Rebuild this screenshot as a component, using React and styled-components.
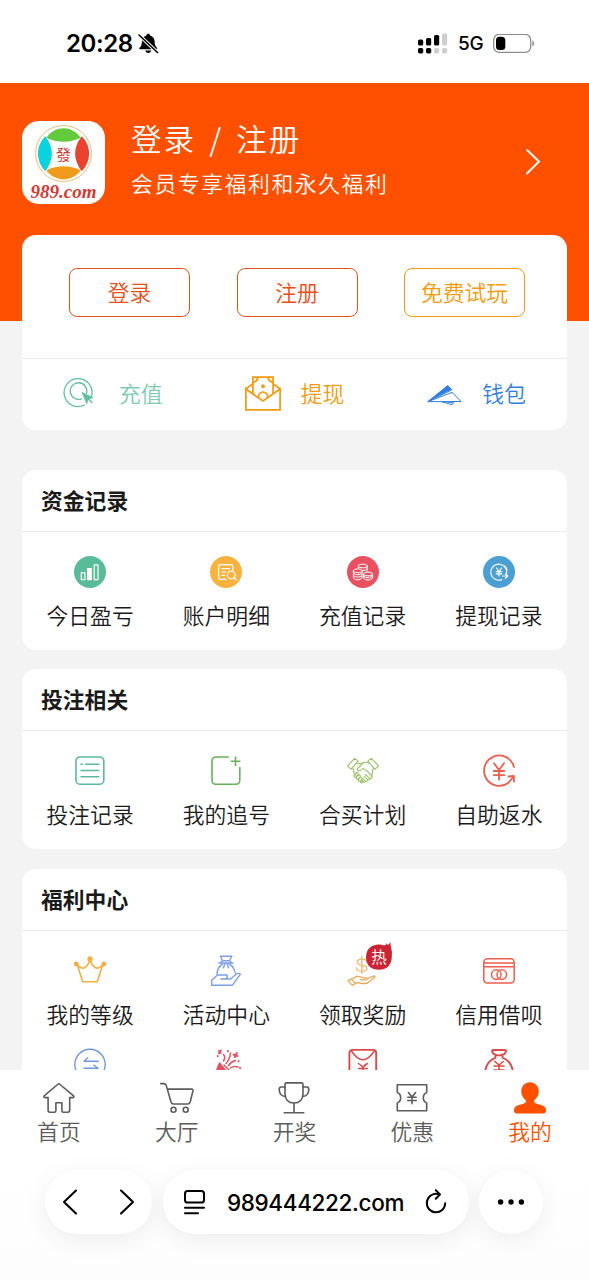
import React from "react";
import styled, { createGlobalStyle } from "styled-components";

const GlobalStyle = createGlobalStyle`
  * {
    box-sizing: border-box;
  }
  body {
    margin: 0;
    background: #fff;
    font-family: "Noto Sans CJK SC", sans-serif;
    font-weight: 350;
    color: #1a1a1a;
  }
`;

const Screen = styled.div`
  width: 589px;
  height: 1280px;
  overflow: hidden;
  display: flex;
  flex-direction: column;
  background: #fff;
`;

/* status bar */

const StatusBar = styled.div`
  flex: none;
  height: 83px;
  padding: 4px 54px 0 66px;
  display: flex;
  align-items: center;
  justify-content: space-between;
  font-family: Inter, sans-serif;
  color: #000;
`;

const StatusGroup = styled.div`
  display: flex;
  align-items: center;
  gap: ${(props) => props.$gap};
`;

const Time = styled.span`
  font-size: 24px;
  font-weight: 600;
  line-height: 30px;
  letter-spacing: -0.4px;
`;

const Network = styled.span`
  font-size: 19px;
  font-weight: 500;
  line-height: 24px;
  letter-spacing: -0.2px;
`;

/* scrolling page */

const Page = styled.div`
  flex: none;
  height: 987px;
  overflow: hidden;
  background: #f3f3f3;
`;

const Header = styled.div`
  height: 238px;
  padding: 38px 48px 0 22px;
  display: flex;
  align-items: flex-start;
  background: #ff5000;
  color: #fff;
`;

const Logo = styled.div`
  width: 83px;
  height: 83px;
  border-radius: 17px;
  background: #fff;
`;

const Welcome = styled.div`
  flex: 1;
  margin: -2px 0 0 26px;
`;

const WelcomeTitle = styled.div`
  font-size: 30.6px;
  line-height: 38px;
  letter-spacing: 2px;
  word-spacing: 4.2px;
  white-space: pre;
`;

const WelcomeText = styled.div`
  margin-top: 11px;
  font-size: 21.8px;
  line-height: 30px;
  letter-spacing: 1.6px;
`;

const HeaderArrow = styled.div`
  margin-top: 27px;
  line-height: 0;
`;

const ActionCard = styled.div`
  height: 195px;
  margin: -86px 22px 39.5px;
  border-radius: 14px;
  background: #fff;
`;

const ButtonRow = styled.div`
  height: 124px;
  padding: 33px 42px 0 47px;
  display: flex;
  justify-content: space-between;
  align-items: flex-start;
  border-bottom: 1px solid #ececec;
`;

const OutlineButton = styled.button`
  width: 121px;
  height: 49px;
  padding: 0 0 2px;
  border: 1.5px solid ${(props) => props.$color};
  border-radius: 8px;
  background: none;
  color: ${(props) => props.$color};
  font: inherit;
  font-size: 21.8px;
  line-height: 32px;
`;

const WalletRow = styled.div`
  height: 70px;
  padding-bottom: 2px;
  display: grid;
  grid-template-columns: repeat(3, 1fr);
`;

const WalletLink = styled.div`
  display: flex;
  align-items: center;
  justify-content: center;
  gap: 20px;
  color: ${(props) => props.$color};
  font-size: 21.8px;
  line-height: 32px;

  svg {
    flex: none;
    margin-bottom: 1px;
  }
`;

const Card = styled.div`
  margin: 0 22px 19.5px;
  border-radius: 14px;
  background: #fff;
`;

const CardTitle = styled.div`
  height: 62px;
  padding-left: 19px;
  border-bottom: 1px solid #ececec;
  font-size: 21.8px;
  font-weight: 700;
  line-height: 59px;
`;

const CardGrid = styled.div`
  padding: 24px 0 18px;
  display: grid;
  grid-template-columns: repeat(4, 1fr);
  row-gap: 17px;
`;

const Cell = styled.div`
  display: flex;
  flex-direction: column;
  align-items: center;
`;

const CellIcon = styled.div`
  position: relative;
  width: 32px;
  height: 32px;
  line-height: 0;
`;

const CellLabel = styled.div`
  margin: 11px 0 1px;
  font-size: 21.8px;
  line-height: 32px;
`;

const HotBadge = styled.div`
  position: absolute;
  left: 19px;
  top: -12px;
  width: 26px;
  height: 26px;
  line-height: 0;
`;

/* bottom tabs */

const TabBar = styled.div`
  flex: none;
  height: 84px;
  display: grid;
  grid-template-columns: repeat(5, 1fr);
`;

const Tab = styled.div`
  padding-top: 12px;
  display: flex;
  flex-direction: column;
  align-items: center;
  color: ${(props) => (props.$active ? "#ff5000" : "#5c5c5c")};
  font-size: 21.8px;
  line-height: 32px;

  svg {
    flex: none;
    margin-bottom: 1px;
  }
`;

/* browser toolbar */

const Toolbar = styled.div`
  flex: 1;
  padding: 16px 46px 0 45px;
  display: flex;
  align-items: flex-start;
  justify-content: space-between;
  background: linear-gradient(#fff, #fdfdfd);
`;

const Pill = styled.div`
  width: ${(props) => props.$width};
  height: 64px;
  padding: ${(props) => props.$padding || "0"};
  display: flex;
  align-items: center;
  justify-content: ${(props) => props.$justify || "space-between"};
  border-radius: 32px;
  background: #fff;
  box-shadow: 0 6px 26px rgba(0, 0, 0, 0.07);
`;

const Url = styled.span`
  font-family: Inter, sans-serif;
  font-size: 22.5px;
  font-weight: 500;
  letter-spacing: -0.35px;
  color: #000;
`;

function Icon({ children, size = 32, color = "currentColor", stroke = 1.4 }) {
  return (
    <svg
      width={size}
      height={size}
      viewBox={`0 0 ${size} ${size}`}
      fill="none"
      stroke={color}
      strokeWidth={stroke}
      strokeLinecap="round"
      strokeLinejoin="round"
      overflow="visible"
    >
      {children}
    </svg>
  );
}

function LogoImage() {
  return (
    <svg width="83" height="83" viewBox="0 0 83 83">
      <circle cx="41.5" cy="32.5" r="28" fill="none" stroke="#edbd78" />
      <path d="M24.3 16.7C33 4 50 4 58.7 16.7Q41.5 24.8 24.3 16.7Z" fill="#62cb3b" />
      <path d="M24.3 49.3C33 61.5 50 61.5 58.7 49.3Q41.5 41 24.3 49.3Z" fill="#f19b1c" />
      <path d="M23.3 15.3C13.5 25 13.5 40 23.3 50.3Q36.5 32.5 23.3 15.3Z" fill="#0bd3de" />
      <path d="M59.7 15.3C69.5 25 69.5 40 59.7 50.3Q46.5 32.5 59.7 15.3Z" fill="#e8432f" />
      <text
        x="41.5"
        y="38.5"
        textAnchor="middle"
        fontFamily="'Noto Sans CJK TC', sans-serif"
        fontWeight="400"
        fontSize="15"
        fill="#d23a34"
      >
        發
      </text>
      <text
        x="41.5"
        y="77"
        textAnchor="middle"
        fontFamily="'Liberation Serif', serif"
        fontWeight="700"
        fontStyle="italic"
        fontSize="19"
        textLength="66"
        fill="#d23a34"
      >
        989.com
      </text>
    </svg>
  );
}

function BellOff() {
  return (
    <svg width="21" height="21" viewBox="0 0 21 21">
      <path
        d="M10.2 0.8C11.3 0.8 12 1.5 12.1 2.4C15.2 3.2 16.5 5.6 16.6 8.5C16.7 12 17.4 13.2 19 14.8C19.5 15.5 19.2 16.3 18.2 16.3H2.4C1.3 16.3 1 15.5 1.5 14.8C3.2 13.2 3.8 12 3.9 8.5C4 5.6 5.3 3.2 8.4 2.4C8.5 1.5 9.2 0.8 10.2 0.8ZM7.2 17.5H13.3C12.7 19.2 11.6 20 10.3 20C9 20 7.8 19.2 7.2 17.5Z"
        fill="#000"
      />
      <path d="M1 2L19.5 19.5" stroke="#fff" strokeWidth="3.4" />
      <path d="M1 2L19.5 19.5" stroke="#000" strokeWidth="1.6" strokeLinecap="round" />
    </svg>
  );
}

function Signal() {
  return (
    <svg width="30" height="21" viewBox="0 0 30 21">
      <g fill="#000">
        <rect x="0" y="6.5" width="5.2" height="6" rx="1.6" />
        <rect x="8" y="5" width="5.2" height="7.5" rx="1.6" />
        <rect x="16" y="2" width="5.2" height="10.5" rx="1.6" />
        <rect x="0" y="15" width="5.2" height="5.4" rx="1.6" />
        <rect x="8" y="15" width="5.2" height="5.4" rx="1.6" />
      </g>
      <g fill="#cfcfcf">
        <rect x="24" y="0.5" width="5.2" height="12" rx="1.6" />
        <rect x="16" y="15" width="5.2" height="5.4" rx="1.6" />
        <rect x="24" y="15" width="5.2" height="5.4" rx="1.6" />
      </g>
    </svg>
  );
}

function Battery() {
  return (
    <svg width="42" height="20" viewBox="0 0 42 20">
      <rect x="0.7" y="0.4" width="37" height="18" rx="5.5" fill="none" stroke="#8f8f8f" strokeWidth="1.3" />
      <rect x="3" y="2.7" width="9.3" height="13.4" rx="3.6" fill="#000" />
      <path d="M39.3 6.3Q41.2 7.5 41.2 9.4Q41.2 11.3 39.3 12.5Z" fill="#8f8f8f" />
    </svg>
  );
}

const TargetIcon = () => (
  <Icon size={36} color="#5fc0a0" stroke={1.3}>
    <path d="M28.6 21.3A14 14 0 1 0 21.6 30" />
    <path d="M23.5 18.4A8.3 8.3 0 1 0 18.5 23.8" />
    <path d="M19.3 17.5L29.8 22.7L25.3 24L23.8 28.4Z" fill="#5fc0a0" strokeWidth="0.8" />
    <path d="M25.5 24L29 27.5" />
  </Icon>
);

const EnvelopeIcon = () => (
  <Icon size={36} color="#f49a0d" stroke={1.7}>
    <path d="M0.9 14V34.9H35.1V14L18 26Z" strokeLinejoin="miter" />
    <path d="M1 13.7L7.6 9M35 13.7L28.4 9" />
    <path d="M7.9 18V2.2H28.1V18" strokeLinejoin="miter" />
    <path d="M12.8 2.4Q12.5 6.6 8.2 7.2M23.2 2.4Q23.5 6.6 27.8 7.2" />
    <path d="M13.4 22.4C13.4 15.4 22.6 15.4 22.6 22.4" />
    <circle cx="18" cy="11.3" r="1.5" fill="#f49a0d" strokeWidth="1" />
  </Icon>
);

const PlaneIcon = () => (
  <Icon size={36} color="#2f7de0" stroke={1}>
    <path d="M2 26.5L21.8 10.5L25.4 14.6Z" fill="#2f7de0" />
    <path d="M2.5 26.5L26 17.3L34.8 26.2Z" />
    <path d="M15 26.5L26 29.7L28 26.5M17 26.5L26.2 27.6" />
  </Icon>
);

const ProfitIcon = () => (
  <Icon color="#fff" stroke={1.2}>
    <circle cx="16" cy="16" r="16" fill="#5abb98" stroke="none" />
    <rect x="7.3" y="16.7" width="3.6" height="7" />
    <rect x="13.6" y="12.6" width="3.6" height="11.1" fill="#fff" />
    <rect x="20.2" y="8.8" width="3.8" height="14.9" />
  </Icon>
);

const DetailIcon = () => (
  <Icon color="#fff" stroke={1.2}>
    <circle cx="16" cy="16" r="16" fill="#f9b140" stroke="none" />
    <path d="M16 23.3H10Q8.7 23.3 8.7 22V10Q8.7 8.7 10 8.7H21.5Q22.8 8.7 22.8 10V14" />
    <path d="M12 12.7H19.5M12 16H16M12 19.3H14.5" />
    <circle cx="21.2" cy="19" r="3.8" />
    <path d="M24 21.8L26.2 23.8" />
  </Icon>
);

const CoinsIcon = () => (
  <Icon color="#fff" stroke={1}>
    <circle cx="16" cy="16" r="16" fill="#ea5160" stroke="none" />
    <ellipse cx="15.7" cy="10" rx="4.4" ry="1.9" />
    <path d="M11.3 10V12M20.1 10V15.5M16 14.7Q19 14.7 20.1 13" />
    <ellipse cx="10.7" cy="14.8" rx="4.3" ry="1.9" />
    <path d="M6.4 14.8V22Q10.7 25.8 15 22V14.8M6.4 17.2Q10.7 20.6 15 17.2M6.4 19.6Q10.7 23 15 19.6" />
    <ellipse cx="21" cy="18" rx="4.4" ry="1.9" />
    <path d="M16.6 18V22.4Q21 25.8 25.4 22.4V18M16.6 20.2Q21 23.6 25.4 20.2" />
  </Icon>
);

const WithdrawIcon = () => (
  <Icon color="#fff" stroke={1.2}>
    <circle cx="16" cy="16" r="16" fill="#4b9fd3" stroke="none" />
    <path d="M23.7 17A8 8 0 1 0 18.7 23.6M24 14Q23.6 11.5 21.5 10" />
    <path d="M13.5 12L16 15.5L18.5 12M16 15.5V20M13.2 15.6H18.8M13.2 17.8H18.8" />
    <path d="M19.5 20H24.5M22.4 17.8L24.7 20L22.4 22.2" />
  </Icon>
);

const ListIcon = () => (
  <Icon color="#5bb9a0" stroke={1.6}>
    <rect x="2" y="2" width="27.8" height="27.2" rx="4" />
    <path d="M7 9.2H8.4M11.5 9.2H24.8M7 15.6H24.8M7 21.7H24.8" strokeWidth="1.5" />
  </Icon>
);

const ChaseIcon = () => (
  <Icon color="#66b359" stroke={1.6}>
    <path d="M18.3 2H6Q2 2 2 6V25.2Q2 29.2 6 29.2H25.8Q29.8 29.2 29.8 25.2V12.6" />
    <path d="M25.5 2V10.6M21.3 6.3H29.8" />
  </Icon>
);

const HandshakeIcon = () => (
  <Icon color="#9bc26a" stroke={1.15}>
    <path d="M0.5 10.8L7.7 3.4L11.2 6.1L4 14.2Z" />
    <path d="M31.5 10.8L24.3 3.4L20.8 6.1L28 14.2Z" />
    <path d="M10.5 8.2Q13.5 9 16.2 7.8Q18.5 6.5 22 8.2" />
    <path d="M5.7 13.2Q7 15 6.8 17.5L9 20.5" />
    <path d="M26.4 13.2Q25 15.5 25.5 18L24.3 21.5" />
    <path d="M16.2 8L10.5 13.5Q9.6 15.5 11.8 16Q14.3 15.6 16 13.5Q18.5 14.5 20 16L25 20.8Q25.6 23.3 23 23.6L18.4 19.5" />
    <path d="M17 21.3L20.6 24.6Q22.4 25.5 23 23.6M15.5 23.5L18 25.9Q20.3 27.5 20.6 24.8M14.5 25.5L16 27Q18 28 18.3 26.1" />
    <path d="M7.2 20.2L9.4 17.6Q11.5 17.3 11.2 19.6L8.8 22.2Q6.6 22.5 7.2 20.2ZM9.3 22.3L11.6 19.8Q13.8 19.8 13.1 22L10.8 24.5Q8.7 24.6 9.3 22.3ZM11.3 24.4L13.3 22.2Q15.4 22.3 14.8 24.4L13 26.3Q11 26.4 11.3 24.4ZM13.3 26.2L14.6 25Q16.4 25.3 15.7 27L14.8 27.8Q13.2 27.7 13.3 26.2Z" />
  </Icon>
);

const RebateIcon = () => (
  <Icon color="#ee5d4a" stroke={1.8}>
    <path d="M31 12A15.2 15.2 0 1 0 25.5 27.8L30.5 21.5" />
    <path d="M25.5 21.5L30.8 21L31 26.5" />
    <path d="M11 8.2L16 15L21 8.2M16 15V24.5M10.8 16H21.2M10.8 20.2H21.2" />
  </Icon>
);

const CrownIcon = () => (
  <Icon color="#f6ae42" stroke={1.6}>
    <path d="M3.2 9.5L8.7 26.8H23.3L28.8 9.5Q24.5 14.3 21.5 12.8Q18 11 16 4.5Q14 11 10.5 12.8Q7.5 14.3 3.2 9.5Z" />
    <circle cx="16" cy="3.9" r="1.8" fill="#f6ae42" />
    <circle cx="2.2" cy="9" r="1.6" fill="#f6ae42" />
    <circle cx="29.8" cy="9" r="1.6" fill="#f6ae42" />
  </Icon>
);

const GiftBagIcon = () => (
  <Icon color="#7c9fe6" stroke={1.4}>
    <path d="M10.5 1.2H21.8L19.5 5.7H12.5ZM12.7 5.7L10 7.7M19.3 5.7L22 7.7M9 8H23" />
    <path d="M13 8.5L9 11.7M15 8.5L13.5 12.7M17 8.5L18.5 12.7M19 8.5L23 11.7M13 8.7Q7.2 12.7 7 19M19 8.7Q24.6 12.7 25.2 18" />
    <path d="M1.7 30.2V25.2L7.5 20H17.2Q17.8 23.8 14.8 24H10.8M15.8 24H20.5L26.7 18.7Q29.5 17.8 30.4 19.2L22.5 30.2H1.7" />
  </Icon>
);

const RewardIcon = () => (
  <Icon color="#eda658" stroke={1.3}>
    <g strokeWidth="1.5" stroke="#f5bd7c">
      <path d="M19.8 7Q19 3.8 14.8 4Q10 4.4 10.3 7.4Q10.7 9.7 14.8 10.2Q20 10.8 20 13.5Q19.7 16.3 14.8 16.3Q9.9 16.1 9.4 13M14.8 1.8V18.2" />
    </g>
    <path d="M1 26L4 23.9L8.4 28.3L5.5 30.4Z" />
    <path d="M4.8 24.2L9.5 21.4Q13.5 21 16 22.8H19.5Q20.8 24 19.2 24.8H13.5M20 23.8L27 20.9Q28.6 21 27.5 22.8L20.5 28Q15 29.2 11.6 27.6L8.5 28.1" />
  </Icon>
);

const CreditIcon = () => (
  <Icon color="#ec5f50" stroke={1.5}>
    <rect x="0.8" y="3.7" width="30.4" height="24.3" rx="3.5" />
    <path d="M1 8.1H31M1 11.8H31" />
    <circle cx="13.3" cy="19.6" r="4.8" />
    <circle cx="18.8" cy="19.6" r="4.8" />
  </Icon>
);

const TransferIcon = () => (
  <Icon color="#6e98e4" stroke={1.4}>
    <circle cx="16" cy="16.5" r="15.2" />
    <path d="M24.3 13.3H10L13.8 9.8M10 20.3H24L20 17.2" />
  </Icon>
);

const PartyIcon = () => (
  <Icon color="#e3525f" stroke={1.5}>
    <path d="M9.5 15L16 23L5 26.5ZM14 17L19 22" fill="#e3525f" />
    <path d="M13.5 13Q16 9.5 13.5 6.5M16 15.5Q20 11 20.5 5M18.5 17.5Q21 13.5 25.5 12.5M20.5 20Q24 17.5 28 19" />
    <path d="M9 2.8L10.6 5M10.8 2.5L9 5.2M23.5 6.5L27.5 8M26.8 5L24.8 9M18 3V3.3M28.5 13V13.2M7.8 8V8.2M30 20H30.2" strokeWidth="2" />
  </Icon>
);

const RedPacketIcon = () => (
  <Icon color="#dc4a4a" stroke={1.9}>
    <rect x="2.4" y="1.9" width="26.8" height="30" rx="3" />
    <path d="M4.5 3Q15.8 20.5 27.3 3" strokeWidth="1.5" />
    <path d="M11.5 15.5L15.8 19L20.2 15.5M15.8 19V28M11.5 20.5H20.2" strokeWidth="1.6" />
  </Icon>
);

const MoneyBagIcon = () => (
  <Icon color="#dd4a46" stroke={1.9}>
    <path d="M10.2 2H21.8Q23.8 2.2 22.5 4.5Q21 7.4 16 7.4Q11 7.4 9.5 4.5Q8.3 2.2 10.2 2ZM12.4 7.2V9.8Q3.5 13 2 24Q2 31.5 8 31.5H24Q30 31.5 30 24Q28.5 13 19.6 9.8V7.2" />
    <path d="M11.8 13.5L16 17L20.2 13.5M16 17V26M11 18H21M11 22H21" strokeWidth="1.6" />
  </Icon>
);

const HomeIcon = () => (
  <Icon stroke={1.6}>
    <path d="M15.8 1.5L30.3 13.6Q32 15.6 29.3 15.6H26.7V28.3Q26.7 30.2 24.8 30.2H20.4Q18.9 30.2 18.9 28.5V20.7H12.9V28.5Q12.9 30.2 11.4 30.2H7Q5.1 30.2 5.1 28.3V15.6H2.5Q-0.2 15.6 1.5 13.6Z" />
  </Icon>
);

const CartIcon = () => (
  <Icon stroke={1.6}>
    <path d="M-0.3 1.6H3Q4.6 1.8 5.2 3.4L10 20Q10.6 22 12.5 22H26.5Q28.6 22 29.2 20L32 8.7Q32.2 7.1 30.5 7.1H6.4" />
    <circle cx="12.5" cy="27.8" r="2.5" />
    <circle cx="24.7" cy="27.8" r="2.5" />
  </Icon>
);

const TrophyIcon = () => (
  <Icon stroke={1.6}>
    <path d="M8.5 0.9H23.5Q25 0.9 25 2.5V12Q24.5 21 16 21Q7.5 21 7 12V2.5Q7 0.9 8.5 0.9ZM16 21V30.8M6.2 30.8H25.8" />
    <path d="M7 5H3.2Q1 5.2 1.2 8Q1.8 14.2 7.2 14.4M25 5H28.8Q31 5.2 30.8 8Q30.2 14.2 24.8 14.4" />
  </Icon>
);

const CouponIcon = () => (
  <Icon stroke={1.6}>
    <path d="M1.3 2.8H30.7V10.5C26.2 12.2 26.2 19.3 30.7 21V28.8H1.3V21C5.8 19.3 5.8 12.2 1.3 10.5Z" />
    <path d="M12.4 10.5L16 15L19.6 10.5M16 15V21.8M11.8 15.2H20.2M11.8 18.5H20.2" />
  </Icon>
);

const MineIcon = () => (
  <Icon stroke={0}>
    <path
      d="M16 0.3C21 0.3 24.8 4.2 24.8 9.5C24.8 13 22.8 16.5 20.3 18.2C19.7 19.8 20.4 21 22 21.6L28.5 23.6C31 24.5 32 26.2 32 28.5C32 30.5 31 31.5 29.3 31.5H2.7C1 31.5 0 30.5 0 28.5C0 26.2 1 24.5 3.5 23.6L10 21.6C11.6 21 12.3 19.8 11.7 18.2C9.2 16.5 7.2 13 7.2 9.5C7.2 4.2 11 0.3 16 0.3Z"
      fill="currentColor"
    />
  </Icon>
);

function Hot() {
  return (
    <HotBadge>
      <svg width="26" height="27" viewBox="0 0 26 27" overflow="visible">
        <path
          d="M13 1.5Q16 1.5 18 2.5Q20.3 2 20.8 0.3Q21.6 1 21.6 2.2L24.6 -0.8Q24 2.5 25.3 5.5Q26.3 8.5 25.8 13.5Q25.5 26.5 13 26.8Q0.3 26.5 0 14Q0.5 2 13 1.5Z"
          fill="#cc2434"
        />
        <text
          x="13"
          y="19.8"
          textAnchor="middle"
          fontFamily="'Noto Sans CJK SC', sans-serif"
          fontSize="15.5"
          fontWeight="400"
          fill="#fff"
        >
          热
        </text>
      </svg>
    </HotBadge>
  );
}

const wallet = [
  { label: "充值", color: "#7accb2", Image: TargetIcon },
  { label: "提现", color: "#f49a0d", Image: EnvelopeIcon },
  { label: "钱包", color: "#2f7de0", Image: PlaneIcon },
];

const sections = [
  {
    title: "资金记录",
    items: [
      { label: "今日盈亏", Image: ProfitIcon },
      { label: "账户明细", Image: DetailIcon },
      { label: "充值记录", Image: CoinsIcon },
      { label: "提现记录", Image: WithdrawIcon },
    ],
  },
  {
    title: "投注相关",
    items: [
      { label: "投注记录", Image: ListIcon },
      { label: "我的追号", Image: ChaseIcon },
      { label: "合买计划", Image: HandshakeIcon },
      { label: "自助返水", Image: RebateIcon },
    ],
  },
  {
    title: "福利中心",
    items: [
      { label: "我的等级", Image: CrownIcon },
      { label: "活动中心", Image: GiftBagIcon },
      { label: "领取奖励", Image: RewardIcon, hot: true },
      { label: "信用借呗", Image: CreditIcon },
      { Image: TransferIcon },
      { Image: PartyIcon },
      { Image: RedPacketIcon },
      { Image: MoneyBagIcon },
    ],
  },
];

const tabs = [
  { label: "首页", Image: HomeIcon },
  { label: "大厅", Image: CartIcon },
  { label: "开奖", Image: TrophyIcon },
  { label: "优惠", Image: CouponIcon },
  { label: "我的", Image: MineIcon, active: true },
];

function Section({ title, items }) {
  return (
    <Card>
      <CardTitle>{title}</CardTitle>
      <CardGrid>
        {items.map(({ label, Image, hot }, index) => (
          <Cell key={index}>
            <CellIcon>
              <Image />
              {hot && <Hot />}
            </CellIcon>
            {label && <CellLabel>{label}</CellLabel>}
          </Cell>
        ))}
      </CardGrid>
    </Card>
  );
}

function BrowserToolbar() {
  return (
    <Toolbar>
      <Pill $width="107px" $padding="0 17px">
        <svg width="16" height="26" viewBox="0 0 16 26" fill="none" stroke="#000" strokeWidth="2.1" strokeLinecap="round" strokeLinejoin="round">
          <path d="M14 1.5L2 13L14 24.5" />
        </svg>
        <svg width="16" height="26" viewBox="0 0 16 26" fill="none" stroke="#000" strokeWidth="2.1" strokeLinecap="round" strokeLinejoin="round">
          <path d="M2 1.5L14 13L2 24.5" />
        </svg>
      </Pill>
      <Pill $width="306px" $padding="0 21px 0 20px">
        <svg width="23" height="26" viewBox="0 0 23 26" fill="none" stroke="#000" strokeWidth="2" strokeLinecap="round">
          <rect x="2" y="2" width="19" height="11.5" rx="2.6" />
          <path d="M2 18.7H21M2 24.3H15" />
        </svg>
        <Url>989444222.com</Url>
        <svg width="22" height="26" viewBox="0 0 22 26" fill="none" stroke="#000" strokeWidth="2" strokeLinecap="round" strokeLinejoin="round">
          <path d="M13.5 5.2A9.2 9.2 0 1 0 20.2 14.2" />
          <path d="M10.8 1.3L15 5.4L10.8 9.8" />
        </svg>
      </Pill>
      <Pill $width="64px" $justify="center">
        <svg width="28" height="8" viewBox="0 0 28 8" fill="#000">
          <circle cx="3.6" cy="4" r="2.7" />
          <circle cx="14" cy="4" r="2.7" />
          <circle cx="24.4" cy="4" r="2.7" />
        </svg>
      </Pill>
    </Toolbar>
  );
}

function App() {
  return (
    <Screen>
      <GlobalStyle />
      <StatusBar>
        <StatusGroup $gap="5px">
          <Time>20:28</Time>
          <BellOff />
        </StatusGroup>
        <StatusGroup $gap="9.5px">
          <Signal />
          <Network>5G</Network>
          <Battery />
        </StatusGroup>
      </StatusBar>
      <Page>
        <Header>
          <Logo>
            <LogoImage />
          </Logo>
          <Welcome>
            <WelcomeTitle>登录 / 注册</WelcomeTitle>
            <WelcomeText>会员专享福利和永久福利</WelcomeText>
          </Welcome>
          <HeaderArrow>
            <svg width="16" height="28" viewBox="0 0 16 28" fill="none" stroke="#fff" strokeWidth="2" strokeLinecap="round">
              <path d="M2 2L14 13.5L2 25.5" />
            </svg>
          </HeaderArrow>
        </Header>
        <ActionCard>
          <ButtonRow>
            <OutlineButton $color="#e8501a">登录</OutlineButton>
            <OutlineButton $color="#e8501a">注册</OutlineButton>
            <OutlineButton $color="#f49a0d">免费试玩</OutlineButton>
          </ButtonRow>
          <WalletRow>
            {wallet.map(({ label, color, Image }) => (
              <WalletLink key={label} $color={color}>
                <Image />
                {label}
              </WalletLink>
            ))}
          </WalletRow>
        </ActionCard>
        {sections.map((section) => (
          <Section key={section.title} {...section} />
        ))}
      </Page>
      <TabBar>
        {tabs.map(({ label, Image, active }) => (
          <Tab key={label} $active={active}>
            <Image />
            {label}
          </Tab>
        ))}
      </TabBar>
      <BrowserToolbar />
    </Screen>
  );
}

export default App;
